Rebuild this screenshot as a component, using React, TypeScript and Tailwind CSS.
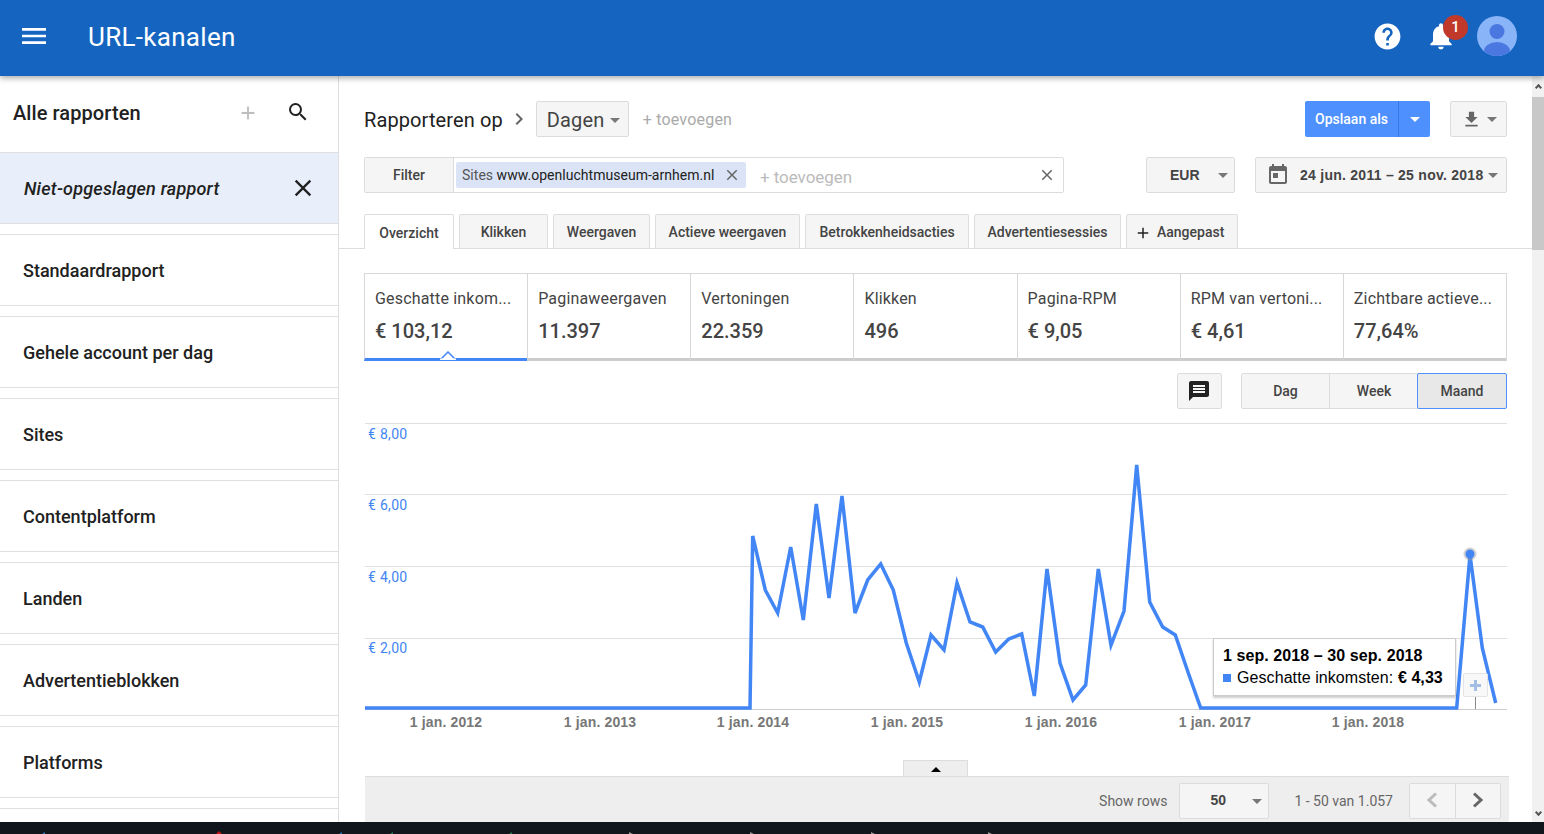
import {
  MdAdd,
  MdChevronRight,
  MdClose,
  MdFileDownload,
  MdHelp,
  MdMenu,
  MdMessage,
  MdNotifications,
  MdSearch,
  MdToday,
} from "react-icons/md";

const reports = [
  "Standaardrapport",
  "Gehele account per dag",
  "Sites",
  "Contentplatform",
  "Landen",
  "Advertentieblokken",
  "Platforms",
];

const tabs = [
  { label: "Klikken", width: "w-[89px]" },
  { label: "Weergaven", width: "w-[97px]" },
  { label: "Actieve weergaven", width: "w-[145px]" },
  { label: "Betrokkenheidsacties", width: "w-[164px]" },
  { label: "Advertentiesessies", width: "w-[147px]" },
];

const metrics = [
  { label: "Geschatte inkom...", value: "€ 103,12" },
  { label: "Paginaweergaven", value: "11.397" },
  { label: "Vertoningen", value: "22.359" },
  { label: "Klikken", value: "496" },
  { label: "Pagina-RPM", value: "€ 9,05" },
  { label: "RPM van vertoni...", value: "€ 4,61" },
  { label: "Zichtbare actieve...", value: "77,64%" },
];

const linePoints =
  "365,708 750,708 752.7,536 765.3,590 777.7,613 790.7,547 803.3,620 816.3,504 829,598 842,496 855,613 867.7,580 880.7,564 893.3,590 906.3,643 919.3,682 931,635 944,650 957,583 970,622 982.7,627 995.7,652 1008.7,639 1021.7,634 1034.3,696 1047,569 1060,663 1073,700 1085.7,685 1098.3,569 1111,645 1124,611 1136.7,465 1149.7,602 1162.7,627 1175.3,635 1188.3,673 1200.7,708 1456.7,708 1470,555 1482.3,648 1495.7,703";

const gridLines = [423, 494, 566, 638];
const yLabels = [
  { y: 439, text: "€ 8,00" },
  { y: 510, text: "€ 6,00" },
  { y: 582, text: "€ 4,00" },
  { y: 653, text: "€ 2,00" },
];
const xLabels = [
  { x: 446, text: "1 jan. 2012" },
  { x: 600, text: "1 jan. 2013" },
  { x: 753, text: "1 jan. 2014" },
  { x: 907, text: "1 jan. 2015" },
  { x: 1061, text: "1 jan. 2016" },
  { x: 1215, text: "1 jan. 2017" },
  { x: 1368, text: "1 jan. 2018" },
];

function Caret({ light }: { light?: boolean }) {
  return (
    <span
      className={`inline-block h-0 w-0 border-x-[5px] border-t-[5px] border-x-transparent ${
        light ? "border-t-white" : "border-t-[#777]"
      }`}
    />
  );
}

function Avatar() {
  return (
    <svg width="40" height="40" viewBox="0 0 40 40" className="ml-[20px]">
      <defs>
        <clipPath id="avatar-clip">
          <circle cx="20" cy="20" r="20" />
        </clipPath>
      </defs>
      <circle cx="20" cy="20" r="20" fill="#8ab4f8" />
      <g clipPath="url(#avatar-clip)" fill="#4a78e0">
        <circle cx="20" cy="15.5" r="7.5" />
        <ellipse cx="20" cy="35" rx="13" ry="9" />
      </g>
    </svg>
  );
}

function Header() {
  return (
    <header className="relative z-10 flex h-[76px] shrink-0 items-center bg-[#1565c0] pl-[18px] pr-[27px] text-white shadow-[0_2px_6px_rgba(0,0,0,0.35)]">
      <MdMenu size={32} className="mb-[4px]" />
      <h1 className="mb-[2px] ml-[38px] text-[26px] leading-none tracking-[0.3px]">URL-kanalen</h1>
      <div className="mb-[4px] ml-auto flex items-center">
        <MdHelp size={31} />
        <div className="relative ml-[22px] h-8 w-8">
          <MdNotifications size={32} />
          <span className="absolute left-[18px] top-[-5px] flex h-[25px] w-[25px] items-center justify-center rounded-full bg-[#c0392b] text-[15px] font-medium">
            1
          </span>
        </div>
        <Avatar />
      </div>
    </header>
  );
}

function Sidebar() {
  return (
    <aside className="w-[339px] shrink-0 overflow-hidden border-r border-[#dedede] bg-white text-[#212121]">
      <div className="flex h-[76px] items-center pb-[2px] pl-[13px]">
        <span className="text-[20px] font-medium tracking-[0.08px]">Alle rapporten</span>
        <MdAdd size={22} className="ml-[96px] text-[#bdbdbd]" />
        <MdSearch size={24} className="mb-[2px] ml-[27px]" />
      </div>
      <div className="flex h-[72px] items-center border-y border-[#dedede] bg-[#e8effb] pl-[24px]">
        <span className="text-[18px] font-medium italic tracking-[0.22px]">Niet-opgeslagen rapport</span>
        <MdClose size={28} className="ml-[70px]" />
      </div>
      <div className="flex flex-col gap-[10px] pt-[10px]">
        {reports.map((name) => (
          <div key={name} className="flex h-[72px] shrink-0 items-center border-y border-[#e0e0e0] pl-[23px] text-[18px] font-medium">
            {name}
          </div>
        ))}
        <div className="h-[72px] shrink-0 border-y border-[#e0e0e0]" />
      </div>
    </aside>
  );
}

function TopControls() {
  return (
    <div className="mt-[25px] flex h-[36px] items-center pl-[25px] pr-[25px]">
      <span className="mt-[2px] text-[20px] tracking-[0.1px] text-[#212121]">Rapporteren op</span>
      <MdChevronRight size={24} className="ml-[4px] text-[#666]" />
      <button className="ml-[5px] flex h-full w-[93px] items-center rounded-[2px] border border-[#dcdcdc] bg-[#f5f5f5] pl-[10px] pt-[2px] text-[20px] tracking-[0.15px] text-[#444]">
        Dagen
        <span className="ml-[6px] flex">
          <Caret />
        </span>
      </button>
      <span className="ml-[14px] mt-[2px] text-[16px] tracking-[0.2px] text-[#aaa]">+ toevoegen</span>
      <div className="ml-auto flex h-full w-[125px] rounded-[2px] bg-[#4d90fe] text-[14px] font-medium text-white">
        <span className="flex w-[93px] items-center justify-center">Opslaan als</span>
        <span className="flex flex-1 items-center justify-center border-l border-[#3b78e7]">
          <Caret light />
        </span>
      </div>
      <button className="ml-[20px] flex h-full w-[57px] items-center justify-center gap-[5px] rounded-[2px] border border-[#dcdcdc] bg-[#f5f5f5] text-[#666]">
        <MdFileDownload size={21} />
        <Caret />
      </button>
    </div>
  );
}

function FilterRow() {
  return (
    <div className="mt-[20px] flex h-[36px] items-stretch pl-[25px] pr-[25px]">
      <div className="flex w-[700px] rounded-[2px] border border-[#dcdcdc]">
        <span className="flex w-[89px] items-center justify-center border-r border-[#dcdcdc] bg-[#f5f5f5] text-[14px] font-medium text-[#444]">
          Filter
        </span>
        <div className="flex flex-1 items-center pl-[2px] pr-[7px]">
          <span className="flex h-[26px] w-[290px] items-center rounded-[2px] bg-[#dbe4f6] pl-[6px] text-[14px] tracking-[0.03px] text-[#212121]">
            <span className="text-[#555]">Sites&nbsp;</span>www.openluchtmuseum-arnhem.nl
            <MdClose size={18} className="ml-[9px] text-[#666]" />
          </span>
          <span className="ml-[14px] mt-[5px] text-[17px] tracking-[-0.05px] text-[#bbb]">+ toevoegen</span>
          <MdClose size={18} className="ml-auto text-[#666]" />
        </div>
      </div>
      <button className="ml-auto flex w-[89px] items-center rounded-[2px] border border-[#dcdcdc] bg-[#f5f5f5] pl-[23px] font-['Liberation_Sans',sans-serif] text-[14px] font-bold text-[#444]">
        EUR
        <span className="ml-[18px] flex">
          <Caret />
        </span>
      </button>
      <button className="ml-[20px] flex w-[252px] items-center rounded-[2px] border border-[#dcdcdc] bg-[#f5f5f5] pl-[10px] font-['Liberation_Sans',sans-serif] text-[14px] font-bold tracking-[0.26px] text-[#444]">
        <MdToday size={24} className="text-[#666]" />
        <span className="ml-[10px]">24 jun. 2011 – 25 nov. 2018</span>
        <span className="ml-[5px] flex">
          <Caret />
        </span>
      </button>
    </div>
  );
}

function Tabs() {
  return (
    <div className="mt-[21px] flex h-[35px] gap-[5px] border-b border-[#ddd] pl-[25px]">
      <div className="flex h-[35px] w-[90px] items-center justify-center rounded-t-[2px] border-x border-t border-[#ddd] bg-white pt-[2px] text-[14px] font-medium text-[#444]">
        Overzicht
      </div>
      {tabs.map((tab) => (
        <div
          key={tab.label}
          className={`flex h-[34px] items-center justify-center rounded-t-[2px] border-x border-t border-[#ddd] bg-[#f5f5f5] pt-[2px] text-[14px] font-medium text-[#444] ${tab.width}`}
        >
          {tab.label}
        </div>
      ))}
      <div className="flex h-[34px] w-[112px] items-center gap-[5px] rounded-t-[2px] border-x border-t border-[#ddd] bg-[#f5f5f5] pl-[7px] pt-[2px] text-[14px] font-medium text-[#444]">
        <MdAdd size={18} className="text-[#222]" />
        Aangepast
      </div>
    </div>
  );
}

function Metrics() {
  return (
    <div className="ml-[25px] mr-[25px] mt-[24px] grid h-[88px] grid-cols-7 border-r border-[#d8d8d8]">
      {metrics.map((m, i) => (
        <div
          key={m.label}
          className={`relative border-l border-t border-[#d8d8d8] pl-[10px] pt-[15px] ${
            i === 0 ? "border-b-[3px] border-b-[#4285f4]" : "border-b-[3px] border-b-[#ccc]"
          }`}
        >
          <div className="whitespace-nowrap text-[16px] leading-[20px] tracking-[0.18px] text-[#444]">{m.label}</div>
          <div className="mt-[10px] text-[20px] font-medium leading-[24px] text-[#444]">{m.value}</div>
          {i === 0 && (
            <svg width="16" height="9" viewBox="0 0 16 9" className="absolute bottom-[-2px] left-[75px]">
              <polygon points="0,9 8,1 16,9" fill="white" stroke="#4285f4" strokeWidth="1.5" />
              <rect x="0" y="7.5" width="16" height="2" fill="white" />
            </svg>
          )}
        </div>
      ))}
    </div>
  );
}

function ChartToolbar() {
  return (
    <div className="mt-[12px] flex h-[36px] pr-[25px]">
      <button className="ml-auto flex w-[45px] items-center justify-center rounded-[2px] border border-[#dcdcdc] bg-[#f5f5f5] pr-[1px] text-[#222]">
        <MdMessage size={24} />
      </button>
      <div className="ml-[19px] flex w-[266px] rounded-[2px] border border-[#dcdcdc] bg-[#f5f5f5] text-[14px] font-medium text-[#444]">
        <span className="flex w-[88px] items-center justify-center border-r border-[#dcdcdc]">Dag</span>
        <span className="flex w-[88px] items-center justify-center">Week</span>
        <span className="-m-px flex flex-1 items-center justify-center rounded-[2px] border border-[#4d90fe] bg-[#e8e8e8]">
          Maand
        </span>
      </div>
    </div>
  );
}

function Chart() {
  return (
    <div className="relative mt-[14px] h-[337px]">
      <svg width="1193" height="337" viewBox="339 423 1193 337" className="block">
        {gridLines.map((y) => (
          <line key={y} x1="365" x2="1507" y1={y + 0.5} y2={y + 0.5} stroke="#e0e0e0" />
        ))}
        <line x1="365" x2="1507" y1="709.5" y2="709.5" stroke="#ccc" />
        {yLabels.map((l) => (
          <text key={l.text} x="368" y={l.y} fontSize="14" letterSpacing="0.3" fill="#4285f4" fontFamily="Roboto, sans-serif">
            {l.text}
          </text>
        ))}
        {xLabels.map((l) => (
          <text
            key={l.text}
            x={l.x}
            y="727"
            textAnchor="middle"
            fontSize="14"
            fontWeight="700"
            letterSpacing="0.15"
            fill="#777"
            fontFamily="'Liberation Sans', sans-serif"
          >
            {l.text}
          </text>
        ))}
        <polyline points={linePoints} fill="none" stroke="#4285f4" strokeWidth="3.5" strokeLinejoin="miter" />
        <circle cx="1470" cy="554" r="6.5" fill="#999" opacity="0.45" />
        <circle cx="1470" cy="554" r="4.5" fill="#4285f4" />
        <line x1="1475.5" x2="1475.5" y1="697" y2="709" stroke="#888" />
      </svg>
      {/* tooltip + annotation marker */}
      <div className="absolute left-[874px] top-[215px] h-[58px] w-[243px] border border-[#ccc] bg-white pl-[9px] pt-[6px] font-['Liberation_Sans',sans-serif] text-[16px] leading-[22px] tracking-[0.08px] text-black shadow-[0_2px_2px_rgba(0,0,0,0.2)]">
        <div className="font-bold">1 sep. 2018 – 30 sep. 2018</div>
        <div className="flex items-center">
          <span className="mr-[6px] h-[8px] w-[8px] bg-[#4285f4]" />
          Geschatte inkomsten:&nbsp;<b>€ 4,33</b>
        </div>
      </div>
      <div className="absolute left-[1124px] top-[250px] flex h-[24px] w-[25px] items-center justify-center rounded-[2px] border border-[#e4e4e4] bg-[#f8f8f8]">
        <svg width="11" height="11" viewBox="0 0 11 11" fill="#a3c0e4">
          <rect x="4" width="3" height="11" />
          <rect y="4" width="11" height="3" />
        </svg>
      </div>
    </div>
  );
}

function Pager({ dir }: { dir: "left" | "right" }) {
  return (
    <svg width="12" height="16" viewBox="0 0 12 16" fill="none" stroke="currentColor" strokeWidth="3">
      <polyline points={dir === "left" ? "10,1.5 3,8 10,14.5" : "2,1.5 9,8 2,14.5"} />
    </svg>
  );
}

function TableBar() {
  return (
    <div className="ml-[26px] mr-[23px] flex flex-col">
      <div className="ml-[538px] flex h-[17px] w-[65px] items-center justify-center border-x border-t border-[#ddd] bg-[#eee]">
        <span className="h-0 w-0 border-x-[5px] border-b-[5px] border-x-transparent border-b-black" />
      </div>
      <div className="-mt-px flex h-[46px] items-start border-t border-[#ddd] bg-[#eee] pr-[8px] pt-[6px]">
        <span className="ml-auto mt-[8px] text-[14px] text-[#666]">Show rows</span>
        <button className="ml-[12px] flex h-[36px] w-[90px] items-center rounded-[2px] border border-[#dcdcdc] bg-[#f5f5f5] pb-[2px] pl-[30px] font-['Liberation_Sans',sans-serif] text-[14px] font-bold text-[#444]">
          50
          <span className="ml-[26px] mt-[2px] flex">
            <Caret />
          </span>
        </button>
        <span className="ml-[25px] mt-[8px] text-[14px] text-[#666]">1 - 50 van 1.057</span>
        <div className="ml-[16px] flex h-[36px] w-[92px] rounded-[2px] border border-[#dcdcdc] bg-[#f5f5f5]">
          <span className="flex flex-1 items-center justify-center border-r border-[#dcdcdc] pb-[2px] text-[#bbb]">
            <Pager dir="left" />
          </span>
          <span className="flex flex-1 items-center justify-center pb-[2px] text-[#666]">
            <Pager dir="right" />
          </span>
        </div>
      </div>
    </div>
  );
}

function Scrollbar() {
  return (
    <div className="flex w-[12px] shrink-0 flex-col items-center bg-[#f1f1f1]">
      <span className="mt-[8px] h-[5px] w-[5px] translate-y-[1px] rotate-45 border-l-2 border-t-2 border-[#555]" />
      <span className="mt-[8px] h-[153px] w-full bg-[#c8c8c8]" />
      <span className="mb-[7px] mt-auto h-[5px] w-[5px] rotate-45 border-b-2 border-r-2 border-[#555]" />
    </div>
  );
}

function Taskbar() {
  return (
    <svg width="1544" height="12" viewBox="0 0 1544 12" className="block shrink-0 bg-[#11151c]">
      <path d="M42 12l3-2v2z" fill="#3a78b0" />
      <path d="M216 12l3-3 3 3z" fill="#c01818" />
      <path d="M339 12l3-2v2z" fill="#2a6ea8" />
      <path d="M390 12l3-2v2z" fill="#2a7a58" />
      <path d="M509 12l3-2v2z" fill="#2a7a58" />
      <path d="M629 10l4 2h-4z" fill="#999" />
      <path d="M750 10l4 2h-4z" fill="#999" />
      <path d="M871 10l4 2h-4z" fill="#999" />
      <path d="M988 10l4 2h-4z" fill="#999" />
    </svg>
  );
}

export default function App() {
  return (
    <div className="flex h-[834px] w-[1544px] flex-col overflow-hidden bg-white font-['Roboto',sans-serif]">
      <Header />
      <div className="flex min-h-0 flex-1">
        <Sidebar />
        <main className="min-w-0 flex-1 overflow-hidden">
          <TopControls />
          <FilterRow />
          <Tabs />
          <Metrics />
          <ChartToolbar />
          <Chart />
          <TableBar />
        </main>
        <Scrollbar />
      </div>
      <Taskbar />
    </div>
  );
}
